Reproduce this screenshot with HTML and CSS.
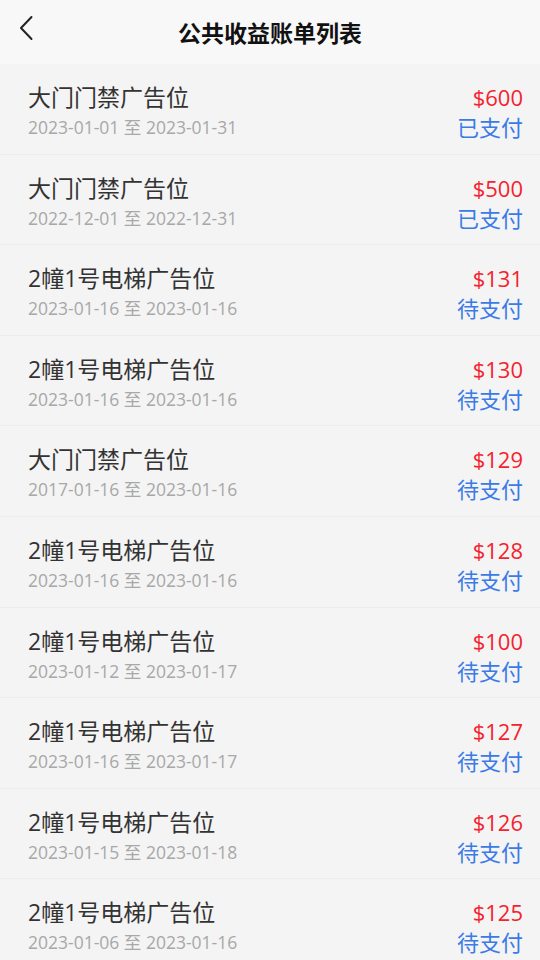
FILE: index.html
```html
<!DOCTYPE html>
<html lang="zh-CN">
<head>
    <meta charset="UTF-8">
    <meta name="viewport" content="width=device-width, initial-scale=1.0">
    <title>公共收益账单列表</title>
    <link rel="stylesheet" href="styles.css">
</head>
<body>
    <div class="header">
        <div class="back">
            <svg width="16" height="26" viewBox="0 0 16 26">
                <path d="M13.5 2 L3 13 L13.5 24" fill="none" stroke="#222" stroke-width="2" stroke-linecap="round" stroke-linejoin="round"/>
            </svg>
        </div>
        <h1>公共收益账单列表</h1>
    </div>

    <div class="list">
        <div class="row">
            <div class="left">
                <div class="name">大门门禁广告位</div>
                <div class="date">2023-01-01 至 2023-01-31</div>
            </div>
            <div class="right">
                <div class="amount">$600</div>
                <div class="status">已支付</div>
            </div>
        </div>
        <div class="row">
            <div class="left">
                <div class="name">大门门禁广告位</div>
                <div class="date">2022-12-01 至 2022-12-31</div>
            </div>
            <div class="right">
                <div class="amount">$500</div>
                <div class="status">已支付</div>
            </div>
        </div>
        <div class="row">
            <div class="left">
                <div class="name">2幢1号电梯广告位</div>
                <div class="date">2023-01-16 至 2023-01-16</div>
            </div>
            <div class="right">
                <div class="amount">$131</div>
                <div class="status">待支付</div>
            </div>
        </div>
        <div class="row">
            <div class="left">
                <div class="name">2幢1号电梯广告位</div>
                <div class="date">2023-01-16 至 2023-01-16</div>
            </div>
            <div class="right">
                <div class="amount">$130</div>
                <div class="status">待支付</div>
            </div>
        </div>
        <div class="row">
            <div class="left">
                <div class="name">大门门禁广告位</div>
                <div class="date">2017-01-16 至 2023-01-16</div>
            </div>
            <div class="right">
                <div class="amount">$129</div>
                <div class="status">待支付</div>
            </div>
        </div>
        <div class="row">
            <div class="left">
                <div class="name">2幢1号电梯广告位</div>
                <div class="date">2023-01-16 至 2023-01-16</div>
            </div>
            <div class="right">
                <div class="amount">$128</div>
                <div class="status">待支付</div>
            </div>
        </div>
        <div class="row">
            <div class="left">
                <div class="name">2幢1号电梯广告位</div>
                <div class="date">2023-01-12 至 2023-01-17</div>
            </div>
            <div class="right">
                <div class="amount">$100</div>
                <div class="status">待支付</div>
            </div>
        </div>
        <div class="row">
            <div class="left">
                <div class="name">2幢1号电梯广告位</div>
                <div class="date">2023-01-16 至 2023-01-17</div>
            </div>
            <div class="right">
                <div class="amount">$127</div>
                <div class="status">待支付</div>
            </div>
        </div>
        <div class="row">
            <div class="left">
                <div class="name">2幢1号电梯广告位</div>
                <div class="date">2023-01-15 至 2023-01-18</div>
            </div>
            <div class="right">
                <div class="amount">$126</div>
                <div class="status">待支付</div>
            </div>
        </div>
        <div class="row">
            <div class="left">
                <div class="name">2幢1号电梯广告位</div>
                <div class="date">2023-01-06 至 2023-01-16</div>
            </div>
            <div class="right">
                <div class="amount">$125</div>
                <div class="status">待支付</div>
            </div>
        </div>
    </div>
</body>
</html>
```

FILE: styles.css
```css
body {
    margin: 0;
    background: #f4f4f4;
    font-family: 'Open Sans', 'Noto Sans CJK SC', sans-serif;
    overflow: hidden;
}

.header {
    position: relative;
    height: 64px;
    background: #f8f8f8;
    display: flex;
    justify-content: center;
    align-items: center;
}

.back {
    position: absolute;
    left: 18px;
    top: 15px;
    width: 16px;
    height: 26px;
}

.header h1 {
    margin: 0;
    font-size: 23px;
    font-weight: bold;
    color: #111;
}

/* Bill rows */
.row {
    box-sizing: border-box;
    height: 90.6px;
    padding: 18px 17px 0 28px;
    display: flex;
    justify-content: space-between;
    border-bottom: 1px solid #ececec;
}

.name {
    font-size: 23px;
    line-height: 30px;
    color: #333;
}

.date {
    font-size: 17.5px;
    line-height: 30px;
    color: #a8a8a8;
}

.right {
    text-align: right;
}

.amount {
    font-size: 22px;
    line-height: 30px;
    color: #f5222d;
}

.status {
    font-size: 22px;
    line-height: 30px;
    color: #3b7be8;
}
```
